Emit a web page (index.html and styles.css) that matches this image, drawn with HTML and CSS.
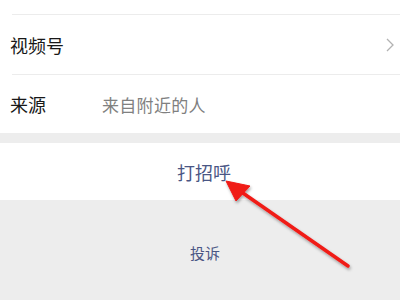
FILE: index.html
```html
<!DOCTYPE html>
<html lang="zh">
<head>
<meta charset="utf-8">
<link rel="stylesheet" href="styles.css">
</head>
<body>
<div class="page">
  <div class="group">
    <div class="top-space"></div>
    <div class="row">
      <span class="label">视频号</span>
      <svg class="chev" width="8" height="14" viewBox="0 0 8 14"><path d="M1 1 L7 7 L1 13" fill="none" stroke="#b2b2b2" stroke-width="1.3"/></svg>
    </div>
    <div class="row">
      <span class="label">来源</span>
      <span class="value">来自附近的人</span>
    </div>
  </div>
  <div class="gap"></div>
  <div class="btn">打招呼</div>
  <div class="footer">
    <span class="link">投诉</span>
  </div>
  <svg class="arrow" width="400" height="300" viewBox="0 0 400 300">
    <defs>
      <filter id="sh" x="-20%" y="-20%" width="140%" height="140%">
        <feDropShadow dx="1" dy="2" stdDeviation="1.5" flood-color="#000" flood-opacity="0.35"/>
      </filter>
    </defs>
    <g filter="url(#sh)" fill="#f01a16" stroke="#f01a16">
      <line x1="348" y1="266" x2="240" y2="191" stroke-width="3.5" stroke-linecap="round"/>
      <polygon points="226,181 250,186 236,201" stroke-width="1" stroke-linejoin="round"/>
    </g>
  </svg>
</div>
</body>
</html>
```
FILE: styles.css
```css
html, body {
  margin: 0;
  padding: 0;
}
body {
  width: 400px;
  height: 300px;
  overflow: hidden;
  background: #ededed;
  font-family: "Noto Sans CJK SC", "Noto Sans", sans-serif;
}
.page {
  position: relative;
  width: 400px;
  height: 300px;
}
.group {
  background: #fff;
  padding-left: 12px;
}
.top-space {
  height: 14px;
  border-bottom: 1px solid #ececec;
}
.row {
  display: flex;
  align-items: center;
  height: 59px;
  border-bottom: 1px solid #ececec;
  padding-right: 6px;
}
.row:last-child {
  border-bottom: none;
  height: 58px;
}
.label {
  margin-left: -2px;
  width: 92px;
  font-size: 18px;
  color: #181818;
}
.value {
  font-size: 17px;
  color: #808080;
  letter-spacing: 0.3px;
}
.chev {
  margin-left: auto;
}
.gap {
  height: 10px;
}
.btn {
  background: #fff;
  height: 57px;
  display: flex;
  align-items: center;
  justify-content: center;
  padding-left: 8px;
  font-size: 18px;
  color: #4a5684;
}
.footer {
  display: flex;
  justify-content: center;
  padding-top: 42px;
  padding-left: 10px;
}
.link {
  font-size: 15px;
  color: #4a5684;
}
.arrow {
  position: absolute;
  left: 0;
  top: 0;
}
```
